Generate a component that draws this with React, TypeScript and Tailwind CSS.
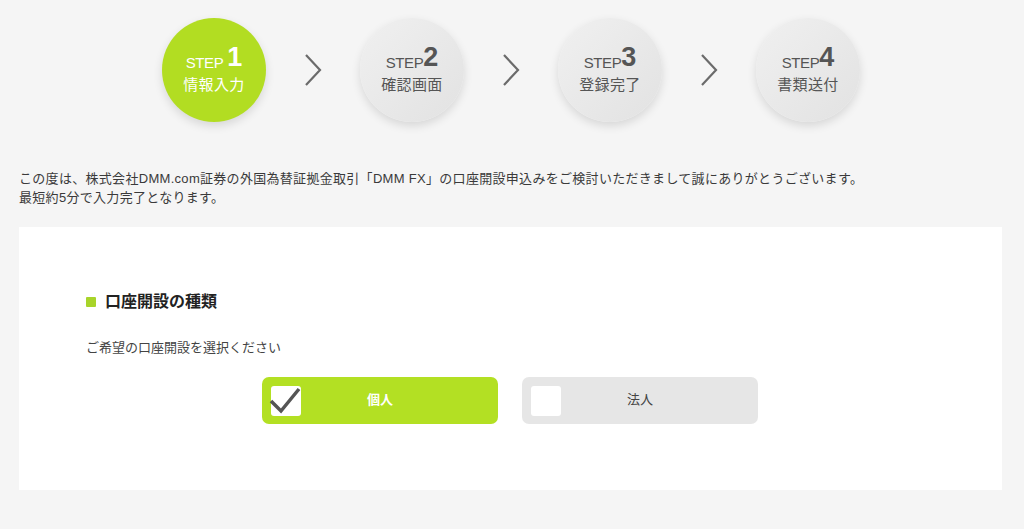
import React from "react";

const font = { fontFamily: '"Helvetica Neue", "Liberation Sans", "Noto Sans CJK JP", sans-serif' };

const steps = [
  { n: "1", label: "情報入力", active: true },
  { n: "2", label: "確認画面", active: false },
  { n: "3", label: "登録完了", active: false },
  { n: "4", label: "書類送付", active: false },
];

function Chevron() {
  return (
    <svg width="20" height="34" viewBox="0 0 20 34" className="mx-[37px]">
      <path d="M3 2 L17 17 L3 32" fill="none" stroke="#6b6b6b" strokeWidth="2.2" />
    </svg>
  );
}

function Step({ n, label, active }: { n: string; label: string; active: boolean }) {
  return (
    <div
      className={
        "w-[104px] h-[104px] rounded-full flex flex-col items-center justify-center shadow-[0_4px_10px_rgba(0,0,0,0.12)] " +
        (active ? "bg-[#b2dd22] text-white" : "bg-gradient-to-br from-[#f0f0f0] to-[#e2e2e2] text-[#555]")
      }
    >
      <div className="flex items-end leading-none">
        <span className="text-[15px] tracking-tight mb-[1px]">STEP</span>
        <span className={"text-[27px] font-bold " + (active ? "ml-[4px]" : "")}>{n}</span>
      </div>
      <div className="text-[15px] mt-[3px] tracking-wide">{label}</div>
    </div>
  );
}

export default function App() {
  return (
    <div className="w-[1024px] h-[529px] bg-[#f5f5f5] text-[#333] overflow-hidden" style={font}>
      <div className="flex items-center justify-center pt-[18px] pr-[2px]">
        {steps.map((s, i) => (
          <React.Fragment key={s.n}>
            {i > 0 && <Chevron />}
            <Step {...s} />
          </React.Fragment>
        ))}
      </div>

      <div className="px-[19px] mt-[47px] text-[13px] leading-[19px] tracking-[0.3px] text-[#3a3a3a]">
        <p>この度は、株式会社DMM.com証券の外国為替証拠金取引「DMM FX」の口座開設申込みをご検討いただきまして誠にありがとうございます。</p>
        <p>最短約5分で入力完了となります。</p>
      </div>

      <div className="ml-[19px] mr-[22px] mt-[20px] h-[263px] bg-white pl-[67px] pt-[63px]">
        <div className="flex items-center gap-[9px]">
          <span className="w-[10px] h-[10px] bg-[#a8d42a] rounded-[1px]" />
          <h2 className="text-[16px] font-bold text-[#222]">口座開設の種類</h2>
        </div>
        <p className="mt-[24px] text-[13px] text-[#444]">ご希望の口座開設を選択ください</p>
        <div className="flex gap-[24px] mt-[19px] ml-[176px]">
          <button className="relative w-[236px] h-[47px] rounded-[7px] bg-[#b3e023] flex items-center justify-center">
            <span className="absolute left-[9px] top-[9px] w-[30px] h-[30px] bg-white rounded-[3px]" />
            <svg className="absolute left-[6px] top-[9px]" width="34" height="30" viewBox="0 0 34 30">
              <path d="M3 15 L13 25 L31 3" fill="none" stroke="#555" strokeWidth="3.5" />
            </svg>
            <span className="text-white text-[13px] font-bold">個人</span>
          </button>
          <button className="relative w-[236px] h-[47px] rounded-[7px] bg-[#e6e6e6] flex items-center justify-center">
            <span className="absolute left-[9px] top-[9px] w-[30px] h-[30px] bg-white rounded-[3px]" />
            <span className="text-[#444] text-[13px]">法人</span>
          </button>
        </div>
      </div>
    </div>
  );
}
